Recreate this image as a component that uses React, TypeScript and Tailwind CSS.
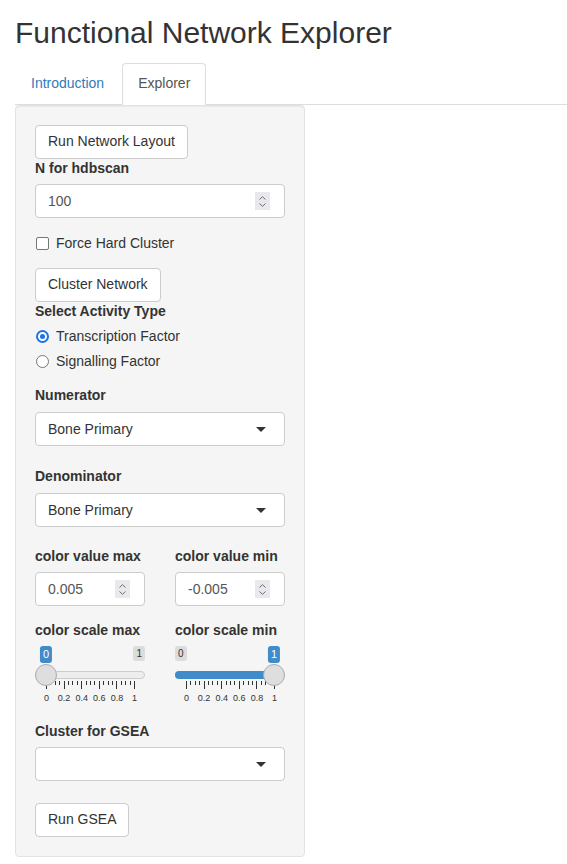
import type { ReactNode } from 'react';

const font = "font-['Liberation_Sans','Helvetica_Neue',Arial,sans-serif]";

function Button({ children }: { children: ReactNode }) {
  return (
    <button className="inline-block h-[34px] rounded-[4px] border border-[#ccc] bg-white px-[12px] pb-[2px] text-[14px] leading-[20px] text-[#333]">
      {children}
    </button>
  );
}

function Label({ children, className = 'mb-[5px]' }: { children: ReactNode; className?: string }) {
  return <label className={`block pb-[1px] font-bold leading-[19px] ${className}`}>{children}</label>;
}

function Spinner() {
  return (
    <span className="flex h-[18px] w-[15px] flex-col items-center justify-center gap-[3px] bg-[#e9e9ed]">
      <svg width="7" height="4" viewBox="0 0 7 4" fill="none" stroke="#6d6d6d" strokeWidth="1">
        <path d="M0.5 3.5 L3.5 0.7 L6.5 3.5" />
      </svg>
      <svg width="7" height="4" viewBox="0 0 7 4" fill="none" stroke="#6d6d6d" strokeWidth="1">
        <path d="M0.5 0.5 L3.5 3.3 L6.5 0.5" />
      </svg>
    </span>
  );
}

function NumberBox({ value }: { value: string }) {
  return (
    <div className="flex h-[34px] w-full items-center justify-between rounded-[4px] border border-[#ccc] bg-white pl-[12px] pr-[14px] text-[#555]">
      <span className="-mt-[1px]">{value}</span>
      <Spinner />
    </div>
  );
}

function SelectBox({ value = '' }: { value?: string }) {
  return (
    <div className="flex h-[34px] w-full items-center justify-between rounded-[4px] border border-[#ccc] bg-white pl-[12px] pr-[18px] text-[#333]">
      <span className="-mt-[1px]">{value}</span>
      <span className="h-0 w-0 border-x-[5px] border-t-[5px] border-x-transparent border-t-[#333]" />
    </div>
  );
}

function Radio({ checked, label }: { checked: boolean; label: string }) {
  return (
    <div className="flex h-[20px] items-center">
      <span
        className={`ml-[1px] mr-[7px] flex h-[13px] w-[13px] items-center justify-center rounded-full border ${
          checked ? 'border-[#1a73e8] border-[2px]' : 'border-[#767676] border-[1.5px]'
        } bg-white`}
      >
        {checked ? <span className="h-[5px] w-[5px] rounded-full bg-[#1a73e8]" /> : null}
      </span>
      <span className="-mt-[1px]">{label}</span>
    </div>
  );
}

const ticks = Array.from({ length: 21 }, (_, i) => i);
const gridLabels = ['0', '0.2', '0.4', '0.6', '0.8', '1'];

function Slider({ value }: { value: 0 | 1 }) {
  // handle travels from 0 to 88px (track is 110 wide, handle 22)
  const handleLeft = value === 0 ? 0 : 88;
  return (
    <div className="relative h-[61px] w-full text-[#333]">
      {value === 1 ? (
        <span className="absolute left-0 top-0 rounded-[3px] bg-[rgba(0,0,0,0.1)] px-[3px] py-[1px] text-[10px] leading-[13px]">0</span>
      ) : null}
      {value === 0 ? (
        <span className="absolute right-0 top-0 rounded-[3px] bg-[rgba(0,0,0,0.1)] px-[3px] py-[1px] text-[10px] leading-[13px]">1</span>
      ) : null}
      <span
        className="absolute top-0 -translate-x-1/2 rounded-[3px] bg-[#428bca] px-[3px] py-[1px] text-[11px] leading-[15px] text-white"
        style={{ left: handleLeft + 11 }}
      >
        {value}
      </span>
      <div className="absolute left-0 right-0 top-[25px] h-[8px] rounded-[8px] border border-[#ccc] bg-[#ededed]" />
      {value === 1 ? (
        <div className="absolute left-0 top-[25px] h-[8px] w-[99px] rounded-l-[8px] bg-[#428bca]" />
      ) : null}
      {ticks.map((i) => (
        <span
          key={i}
          className={`absolute top-[35px] w-[1px] bg-[#333] ${i % 4 === 0 ? 'h-[8px]' : 'h-[4px]'}`}
          style={{ left: 11 + i * 4.4 }}
        />
      ))}
      <div
        className="absolute top-[18px] h-[22px] w-[22px] rounded-full border border-[#ababab] bg-[#dedede]"
        style={{ left: handleLeft }}
      />
      {gridLabels.map((t, i) => (
        <span
          key={t}
          className="absolute top-[46px] -translate-x-1/2 text-[9px] leading-[12px] text-[#333]"
          style={{ left: 11.5 + i * 17.6 }}
        >
          {t}
        </span>
      ))}
    </div>
  );
}

export default function App() {
  return (
    <div className={`min-h-screen bg-white px-[15px] text-[14px] leading-[20px] text-[#333] ${font}`}>
      <h2 className="mb-[14px] pt-[16px] text-[30px] font-medium leading-[33px]">Functional Network Explorer</h2>

      <ul className="-mr-[15px] flex border-b border-[#ddd]">
        <li className="-mb-px mr-[2px]">
          <a className="block rounded-t-[4px] border border-transparent px-[15px] pb-[11px] pt-[9px] text-[#337ab7]">Introduction</a>
        </li>
        <li className="-mb-px">
          <a className="block rounded-t-[4px] border border-[#ddd] border-b-transparent bg-white px-[15px] pb-[11px] pt-[9px] text-[#555]">
            Explorer
          </a>
        </li>
      </ul>

      <div className="w-[290px] rounded-[4px] border border-[#e3e3e3] bg-[#f5f5f5] p-[19px] shadow-[inset_0_1px_1px_rgba(0,0,0,0.05)]">
        <Button>Run Network Layout</Button>
        <Label>N for hdbscan</Label>
        <NumberBox value="100" />

        <div className="mt-[15px] flex h-[20px] items-center">
          <span className="ml-[1px] mr-[7px] h-[13px] w-[13px] rounded-[2px] border-[1.5px] border-[#767676] bg-white" />
          <span className="-mt-[1px]">Force Hard Cluster</span>
        </div>

        <div className="mt-[15px]">
          <Button>Cluster Network</Button>
        </div>
        <Label className="mb-[4px]">Select Activity Type</Label>
        <div className="flex flex-col gap-[5px]">
          <Radio checked label="Transcription Factor" />
          <Radio checked={false} label="Signalling Factor" />
        </div>

        <Label className="mb-[6px] mt-[15px]">Numerator</Label>
        <SelectBox value="Bone Primary" />

        <Label className="mb-[6px] mt-[21px]">Denominator</Label>
        <SelectBox value="Bone Primary" />

        <div className="mt-[20px] grid grid-cols-2 gap-x-[30px]">
          <div>
            <Label>color value max</Label>
            <NumberBox value="0.005" />
          </div>
          <div>
            <Label>color value min</Label>
            <NumberBox value="-0.005" />
          </div>
          <div className="mt-[15px]">
            <Label>color scale max</Label>
            <Slider value={0} />
          </div>
          <div className="mt-[15px]">
            <Label>color scale min</Label>
            <Slider value={1} />
          </div>
        </div>

        <Label className="mb-[5px] mt-[15px]">Cluster for GSEA</Label>
        <SelectBox />

        <div className="mt-[22px]">
          <Button>Run GSEA</Button>
        </div>
      </div>
    </div>
  );
}
